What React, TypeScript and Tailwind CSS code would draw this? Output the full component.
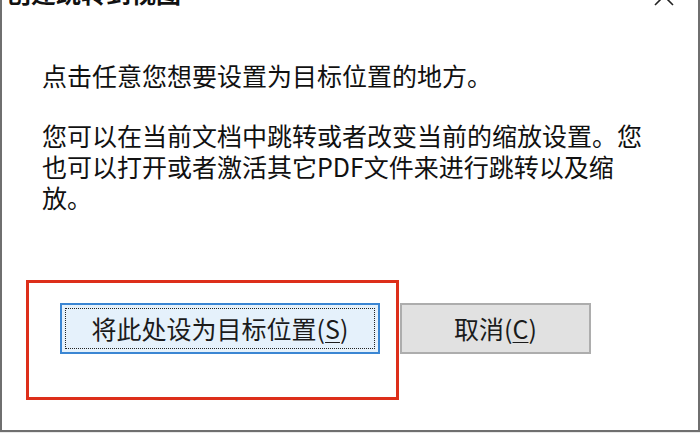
const font = { fontFamily: '"Noto Sans CJK SC", "Microsoft YaHei", sans-serif' };

function Underlined({ label, hot }: { label: string; hot: string }) {
  return (
    <span>
      {label}(<span className="underline underline-offset-[3px] decoration-1">{hot}</span>)
    </span>
  );
}

export default function App() {
  return (
    <div className="w-[700px] h-[433px] bg-[#e9e9e9] overflow-hidden" style={font}>
      <div className="relative w-[700px] h-[432px] bg-white border-l-2 border-r-2 border-b-2 border-[#6f6f6f] flex flex-col text-black">
        {/* title bar, mostly scrolled off the top */}
        <div className="h-[8px] relative">
          <div className="absolute left-[4px] top-[-20px] text-[25px] leading-[25px] font-bold text-[#111]">创建跳转到视图</div>
          <svg className="absolute left-[651px] top-[-14px]" width="22" height="20" viewBox="0 0 22 20">
            <path d="M2 1 L20 19 M20 1 L2 19" stroke="#222" strokeWidth="1.6" fill="none" />
          </svg>
        </div>

        <div className="pl-[40px] pr-[36px] pt-[52px] text-[25px] leading-[31px] text-[#111]">
          <p>点击任意您想要设置为目标位置的地方。</p>
          <p className="mt-[29px] w-[622px]">
            您可以在当前文档中跳转或者改变当前的缩放设置。您也可以打开或者激活其它PDF文件来进行跳转以及缩
            <br />
            放。
          </p>
        </div>

        <div className="flex items-center gap-[20px] pl-[58px] mt-[90px]">
          <button className="relative w-[320px] h-[51px] border-2 border-[#3b86d3] bg-[#e5f1fb] text-[25px] text-[#1b1b1b] flex items-center justify-center">
            <span className="absolute inset-[3px] border border-dotted border-[#222]" />
            <Underlined label="将此处设为目标位置" hot="S" />
          </button>
          <button className="w-[191px] h-[51px] border-2 border-[#adadad] bg-[#e1e1e1] text-[25px] text-[#1b1b1b] flex items-center justify-center">
            <Underlined label="取消" hot="C" />
          </button>
        </div>

        {/* red annotation box */}
        <div className="absolute left-[24px] top-[280px] w-[373px] h-[120px] border-[3px] border-[#dd2f1a] pointer-events-none" />
      </div>
    </div>
  );
}
